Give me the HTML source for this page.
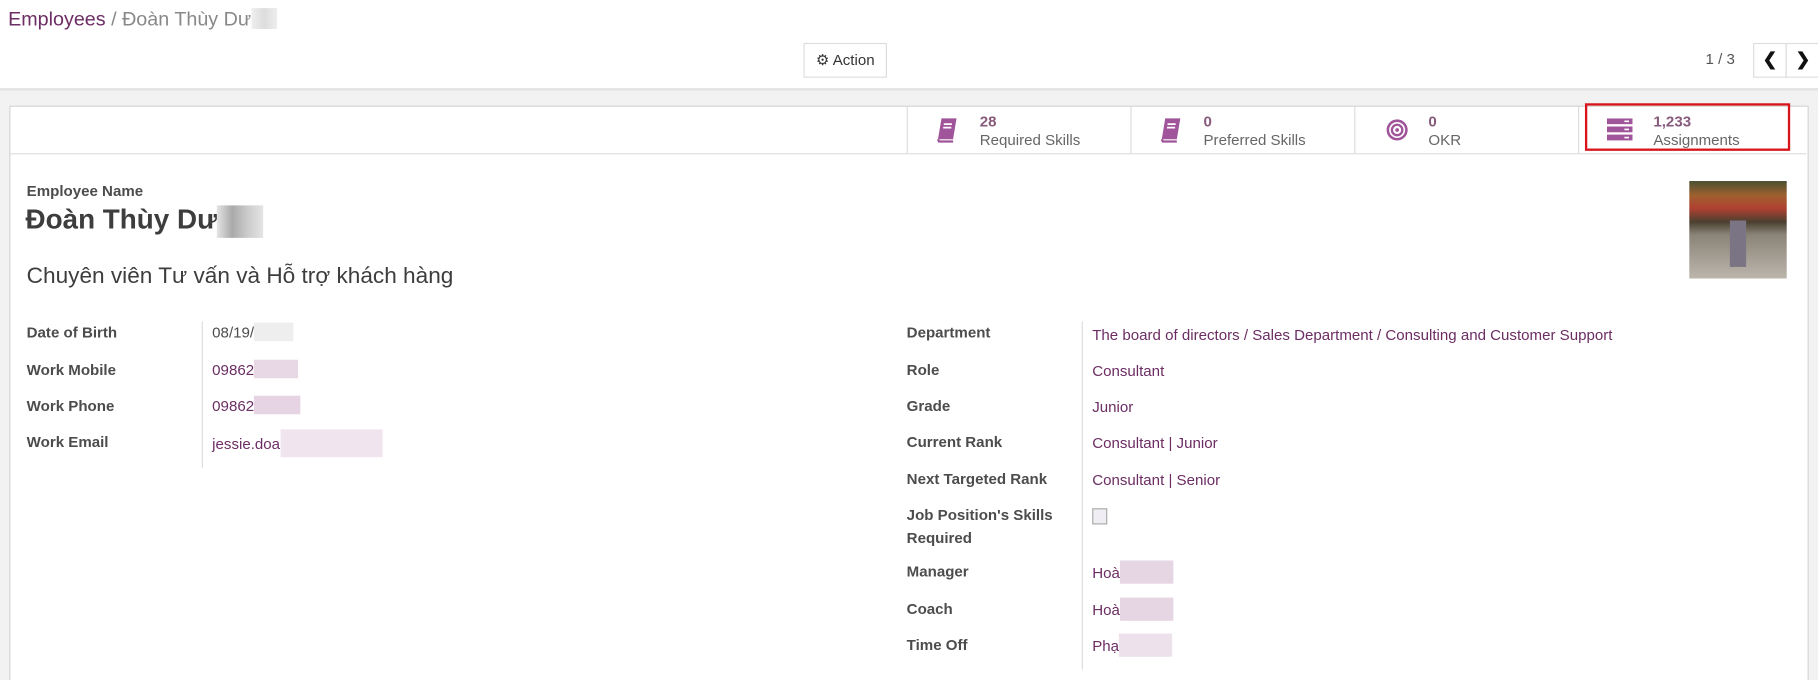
<!DOCTYPE html>
<html><head><meta charset="utf-8"><style>
html,body{margin:0;padding:0;width:1818px;height:680px;overflow:hidden;background:#fff}
#w{position:absolute;left:0;top:0;width:1568px;height:586px;overflow:hidden;transform:scale(1.15944,1.16041);transform-origin:0 0;font-family:"Liberation Sans","Noto Sans CJK SC",sans-serif;color:#4c4c4c;font-size:13px}
.a{position:absolute;white-space:nowrap}
.p{color:#6b2d63}
.lb{font-weight:bold;color:#4c4c4c}
.blur{display:inline-block;vertical-align:middle}
.stat{position:absolute;top:92px;height:40px;border-left:1px solid #ddd}
.stat .n{position:absolute;top:5px;font-weight:bold;color:#875a7b;font-size:13px}
.stat .t{position:absolute;top:21px;color:#666;font-size:13px}
</style></head><body><div id="w">
<div class="a" style="left:7px;top:7px;font-size:17px"><span style="color:#6b2d63">Employees</span> <span style="color:#888">/ Đoàn Thùy Dư</span><span class="blur" style="width:22px;height:18px;background:linear-gradient(90deg,#eee,#ddd,#eee);margin-top:-4px"></span></div>
<div class="a" style="left:693px;top:37px;width:70px;height:28px;border:1px solid #ddd;line-height:28px;text-align:center;color:#333">⚙ Action</div>
<div class="a" style="left:1471px;top:43px;color:#555">1 / 3</div>
<div class="a" style="left:1512px;top:37px;width:27px;height:28px;border:1px solid #ddd;text-align:center;line-height:28px;font-weight:bold;color:#111;font-size:15px">&#10094;</div>
<div class="a" style="left:1540px;top:37px;width:28px;height:28px;border:1px solid #ddd;text-align:center;line-height:28px;font-weight:bold;color:#111;font-size:15px">&#10095;</div>
<div class="a" style="left:0;top:76px;width:1568px;height:510px;background:#f2f2f2;border-top:2px solid #e2e2e2"></div>
<div class="a" style="left:8px;top:91px;width:1550px;height:520px;background:#fff;border:1px solid #d3d3d3"></div>
<div class="a" style="left:9px;top:132px;width:1549px;height:1px;background:#ddd"></div>
<div class="stat" style="left:782px;width:193px">
<svg class="a" style="left:24px;top:9px" width="20" height="22" viewBox="0 0 20 22"><path d="M5 1h13l-3 18H2z" fill="#a0559a"/><path d="M2 19l1 2h12" stroke="#a0559a" stroke-width="2" fill="none"/><path d="M7 6h7M6.5 9h7" stroke="#fff" stroke-width="1.5"/></svg>
<span class="n" style="left:62px">28</span><span class="t" style="left:62px">Required Skills</span></div>
<div class="stat" style="left:975px;width:193px">
<svg class="a" style="left:24px;top:9px" width="20" height="22" viewBox="0 0 20 22"><path d="M5 1h13l-3 18H2z" fill="#a0559a"/><path d="M2 19l1 2h12" stroke="#a0559a" stroke-width="2" fill="none"/><path d="M7 6h7M6.5 9h7" stroke="#fff" stroke-width="1.5"/></svg>
<span class="n" style="left:62px">0</span><span class="t" style="left:62px">Preferred Skills</span></div>
<div class="stat" style="left:1168px;width:193px">
<svg class="a" style="left:26px;top:10px" width="20" height="20" viewBox="0 0 20 20"><circle cx="10" cy="10" r="8" fill="none" stroke="#a0559a" stroke-width="2.2"/><circle cx="10" cy="10" r="4.5" fill="none" stroke="#a0559a" stroke-width="2"/><circle cx="10" cy="10" r="1.6" fill="#a0559a"/></svg>
<span class="n" style="left:63px">0</span><span class="t" style="left:63px">OKR</span></div>
<div class="stat" style="left:1361px;width:197px">
<svg class="a" style="left:24px;top:10px" width="22" height="20" viewBox="0 0 22 20"><rect x="0" y="0" width="22" height="5" fill="#a0559a"/><rect x="0" y="7" width="22" height="5" fill="#a0559a"/><rect x="0" y="14" width="22" height="5" fill="#a0559a"/><path d="M15 2.5h4M15 9.5h4M15 16.5h4" stroke="#fff" stroke-width="1.4"/></svg>
<span class="n" style="left:64px">1,233</span><span class="t" style="left:64px">Assignments</span></div>
<div class="a" style="left:1367px;top:89px;width:173px;height:37px;border:2px solid #d9141c"></div>
<div class="a lb" style="left:23px;top:157px">Employee Name</div>
<div class="a" style="left:22px;top:176px;font-size:24px;font-weight:bold;color:#3d3d3d">Đoàn Thùy Dư<span class="blur" style="width:40px;height:28px;background:linear-gradient(90deg,#e4e4e4,#aaa,#ccc,#e4e4e4)"></span></div>
<div class="a" style="left:23px;top:227px;font-size:19.5px;color:#3d3d3d">Chuyên viên Tư vấn và Hỗ trợ khách hàng</div>
<div class="a" style="left:1457px;top:156px;width:84px;height:84px;background:linear-gradient(180deg,#4a5030 0%,#a06030 15%,#b04030 28%,#4a4030 42%,#8a8478 55%,#bbb5ac 100%)"></div>
<div class="a" style="left:1492px;top:190px;width:14px;height:40px;background:#7a7484"></div>
<div class="a" style="left:174px;top:277px;width:1px;height:126px;background:#ddd"></div>
<div class="a lb" style="left:23px;top:279px">Date of Birth</div><div class="a" style="left:183px;top:279px">08/19/<span class="blur" style="width:34px;height:16px;background:#eee;margin-top:-3px"></span></div>
<div class="a lb" style="left:23px;top:311px">Work Mobile</div><div class="a p" style="left:183px;top:311px">09862<span class="blur" style="width:38px;height:16px;background:#e8d8e6;margin-top:-3px"></span></div>
<div class="a lb" style="left:23px;top:342px">Work Phone</div><div class="a p" style="left:183px;top:342px">09862<span class="blur" style="width:40px;height:16px;background:#e6d4e4;margin-top:-3px"></span></div>
<div class="a lb" style="left:23px;top:373px">Work Email</div><div class="a p" style="left:183px;top:373px">jessie.doa<span class="blur" style="width:88px;height:24px;background:#f0e4ee;margin-top:-3px"></span></div>
<div class="a" style="left:933px;top:277px;width:1px;height:300px;background:#ddd"></div>
<div class="a lb" style="left:782px;top:279px">Department</div><div class="a p" style="left:942px;top:281px">The board of directors / Sales Department / Consulting and Customer Support</div>
<div class="a lb" style="left:782px;top:311px">Role</div><div class="a p" style="left:942px;top:312px">Consultant</div>
<div class="a lb" style="left:782px;top:342px">Grade</div><div class="a p" style="left:942px;top:343px">Junior</div>
<div class="a lb" style="left:782px;top:373px">Current Rank</div><div class="a p" style="left:942px;top:374px">Consultant | Junior</div>
<div class="a lb" style="left:782px;top:405px">Next Targeted Rank</div><div class="a p" style="left:942px;top:406px">Consultant | Senior</div>
<div class="a lb" style="left:782px;top:434px;line-height:20px">Job Position's Skills<br>Required</div>
<div class="a" style="left:942px;top:438px;width:11px;height:12px;border:1px solid #aaa;background:#f0eef4"></div>
<div class="a lb" style="left:782px;top:485px">Manager</div><div class="a p" style="left:942px;top:486px">Hoà<span class="blur" style="width:46px;height:20px;background:#e6d6e4;margin-top:-3px"></span></div>
<div class="a lb" style="left:782px;top:517px">Coach</div><div class="a p" style="left:942px;top:518px">Hoà<span class="blur" style="width:46px;height:20px;background:#e6d6e4;margin-top:-3px"></span></div>
<div class="a lb" style="left:782px;top:548px">Time Off</div><div class="a p" style="left:942px;top:549px">Phạ<span class="blur" style="width:46px;height:20px;background:#ede2ec;margin-top:-3px"></span></div>
</div></body></html>
